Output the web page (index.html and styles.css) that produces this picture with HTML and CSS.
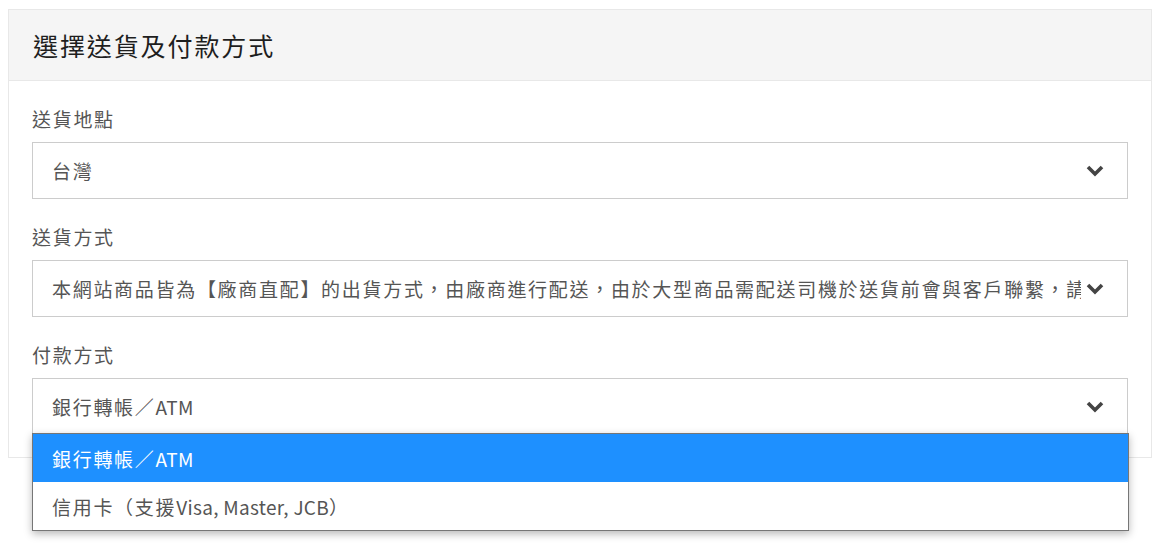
FILE: index.html
```html
<!DOCTYPE html>
<html lang="zh-Hant">
<head>
<meta charset="utf-8">
<title>選擇送貨及付款方式</title>
<link rel="stylesheet" href="styles.css">
</head>
<body>
<section class="card">
  <header class="card-head">
    <h2 class="title">選擇送貨及付款方式</h2>
  </header>
  <div class="card-body">
    <div class="field">
      <div class="label">送貨地點</div>
      <div class="select">
        <span class="value">台灣</span>
        <svg class="chev" viewBox="0 0 18 12" width="18" height="12"><polyline points="2,2 9,9 16,2" fill="none" stroke="#444" stroke-width="3.6" stroke-linecap="butt" stroke-linejoin="miter"/></svg>
      </div>
    </div>
    <div class="field">
      <div class="label">送貨方式</div>
      <div class="select">
        <span class="value">本網站商品皆為【廠商直配】的出貨方式，由廠商進行配送，由於大型商品需配送司機於送貨前會與客戶聯繫，請保持電話暢通</span>
        <svg class="chev" viewBox="0 0 18 12" width="18" height="12"><polyline points="2,2 9,9 16,2" fill="none" stroke="#444" stroke-width="3.6" stroke-linecap="butt" stroke-linejoin="miter"/></svg>
      </div>
    </div>
    <div class="field">
      <div class="label">付款方式</div>
      <div class="select open">
        <span class="value">銀行轉帳／<span class="latin">ATM</span></span>
        <svg class="chev" viewBox="0 0 18 12" width="18" height="12"><polyline points="2,2 9,9 16,2" fill="none" stroke="#444" stroke-width="3.6" stroke-linecap="butt" stroke-linejoin="miter"/></svg>
        <ul class="menu">
          <li class="opt selected">銀行轉帳／<span class="latin">ATM</span></li>
          <li class="opt">信用卡（支援<span class="latin">Visa, Master, JCB</span>）</li>
        </ul>
      </div>
    </div>
  </div>
</section>
</body>
</html>
```

FILE: styles.css
```css
html, body {
  background: #fff;
}
body {
  margin: 8px;
  min-height: 538px;
  font-family: "Noto Sans CJK TC", "Noto Sans", sans-serif;
  color: #555;
}
.card {
  margin-top: 1px;
  width: 1144px;
  box-sizing: border-box;
  border: 1px solid #e8e8e8;
  background: #fff;
}
.card-head {
  height: 70px;
  background: #f5f5f5;
  border-bottom: 1px solid #e8e8e8;
  display: flex;
  align-items: center;
  padding: 0 24px;
}
.title {
  margin: 0;
  font-size: 25px;
  font-weight: 400;
  letter-spacing: 1.9px;
  color: #1e1e1e;
  line-height: 1;
}
.card-body {
  padding: 24px 23px 22px 23px;
  display: flex;
  flex-direction: column;
  gap: 24px;
}
.field {
  display: flex;
  flex-direction: column;
  gap: 9px;
}
.label {
  font-size: 19px;
  line-height: 28px;
  letter-spacing: 1.7px;
  color: #555;
}
.select {
  position: relative;
  height: 55px;
  border: 1px solid #cccccc;
  display: flex;
  align-items: center;
  padding: 0 46px 0 19px;
  background: #fff;
}
.value {
  font-size: 19px;
  letter-spacing: 1.7px;
  color: #555;
  white-space: nowrap;
  overflow: hidden;
  flex: 1;
  line-height: 28px;
}
.latin {
  letter-spacing: 0.3px;
}
.chev {
  position: absolute;
  right: 23px;
  top: 22px;
}
.menu {
  position: absolute;
  left: -1px;
  top: 54px;
  width: 1097px;
  box-sizing: border-box;
  margin: 0;
  padding: 0;
  list-style: none;
  border: 1px solid #767676;
  background: #fff;
  box-shadow: 0 3px 8px rgba(0, 0, 0, 0.28);
  z-index: 2;
}
.opt {
  height: 48px;
  display: flex;
  align-items: center;
  padding-left: 19px;
  font-size: 19px;
  letter-spacing: 1.7px;
  color: #555;
}
.opt.selected {
  background: #1e90ff;
  color: #fff;
}
```
